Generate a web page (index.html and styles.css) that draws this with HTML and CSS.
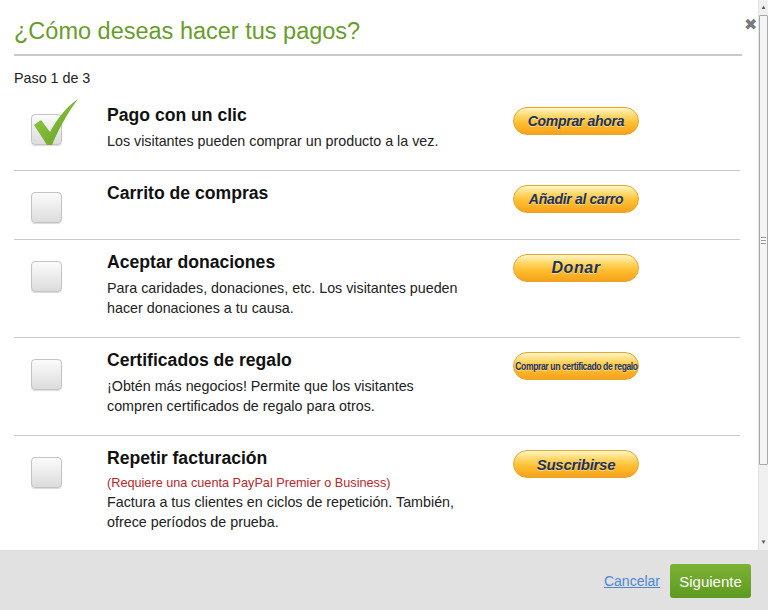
FILE: index.html
```html
<!DOCTYPE html>
<html lang="es">
<head>
    <meta charset="UTF-8">
    <title>¿Cómo deseas hacer tus pagos?</title>
    <link rel="stylesheet" href="styles.css">
</head>
<body>
    <div class="dialog">
        <div class="dialog-main">
            <div class="dialog-body">
                <span class="close">&#x2716;</span>
                <h1 class="title">¿Cómo deseas hacer tus pagos?</h1>
                <p class="step">Paso 1 de 3</p>

                <ul class="options">
                    <li class="option">
                        <span class="check is-checked">
                            <svg class="tick" width="48" height="50" viewBox="0 0 48 50">
                                <defs>
                                    <linearGradient id="g" x1="0" y1="0" x2="1" y2="1">
                                        <stop offset="0" stop-color="#9ccf4a"/>
                                        <stop offset="1" stop-color="#5e9c1e"/>
                                    </linearGradient>
                                </defs>
                                <path d="M2 27 L9 22 L18 34 C25 21 34 9 46 1 C37 13 28 28 20 47 L15 47 Z" fill="url(#g)"/>
                            </svg>
                        </span>
                        <div class="info">
                            <h2>Pago con un clic</h2>
                            <p>Los visitantes pueden comprar un producto a la vez.</p>
                        </div>
                        <span class="pp-btn">Comprar ahora</span>
                    </li>
                    <li class="option">
                        <span class="check"></span>
                        <div class="info">
                            <h2>Carrito de compras</h2>
                        </div>
                        <span class="pp-btn">Añadir al carro</span>
                    </li>
                    <li class="option">
                        <span class="check"></span>
                        <div class="info">
                            <h2>Aceptar donaciones</h2>
                            <p>Para caridades, donaciones, etc. Los visitantes pueden hacer donaciones a tu causa.</p>
                        </div>
                        <span class="pp-btn pp-donar">Donar</span>
                    </li>
                    <li class="option">
                        <span class="check"></span>
                        <div class="info">
                            <h2>Certificados de regalo</h2>
                            <p>¡Obtén más negocios! Permite que los visitantes compren certificados de regalo para otros.</p>
                        </div>
                        <span class="pp-btn pp-small"><span>Comprar un certificado de regalo</span></span>
                    </li>
                    <li class="option">
                        <span class="check"></span>
                        <div class="info">
                            <h2>Repetir facturación</h2>
                            <p class="note">(Requiere una cuenta PayPal Premier o Business)</p>
                            <p>Factura a tus clientes en ciclos de repetición. También, ofrece períodos de prueba.</p>
                        </div>
                        <span class="pp-btn pp-sub">Suscribirse</span>
                    </li>
                </ul>
            </div>
            <div class="scrollbar">
                <span class="sb-btn">&#9650;</span>
                <span class="sb-thumb"><i></i></span>
                <span class="sb-track"></span>
                <span class="sb-btn">&#9660;</span>
            </div>
        </div>
        <div class="dialog-foot">
            <a href="#" class="cancel">Cancelar</a>
            <button class="next">Siguiente</button>
        </div>
    </div>
</body>
</html>
```

FILE: styles.css
```css
* {
    margin:0; padding:0;
    box-sizing: border-box;
}
html, body { height:100%; }
body {
    background: #fff;
    color: #222;
    font-family: "Liberation Sans", Arial, sans-serif;
    overflow: hidden;
}
.dialog {
    height: 610px;
    display: flex;
    flex-direction: column;
}
.dialog-main {
    display: flex;
    height: 550px;
}
.dialog-body {
    position: relative;
    flex: 1;
    overflow: hidden;
    padding: 0 16px 0 14px;
}

/* fake scrollbar */
.scrollbar {
    width: 10px;
    display: flex;
    flex-direction: column;
    background: #f0f0f0;
    border-left: 1px solid #e2e2e2;
}
.sb-btn {
    height: 15px;
    font-size: 6px;
    line-height: 15px;
    text-align: center;
    color: #555;
}
.sb-thumb {
    height: 450px;
    display: flex;
    align-items: center;
    justify-content: center;
    background: #f4f4f4;
    border: 1px solid #a8a8a8;
    border-radius: 1px;
}
.sb-thumb i {
    width: 5px;
    height: 7px;
    border-top: 1px solid #999;
    border-bottom: 1px solid #999;
    background: linear-gradient(#fff 2px, #999 2px, #999 3px, #fff 3px);
}
.sb-track {
    flex: 1;
}

.close {
    position: absolute;
    top: 15px;
    right: 1px;
    font-size: 16px;
    color: #7a7a7a;
}
.title {
    padding-top: 17px;
    padding-bottom: 9px;
    border-bottom: 2px solid #cacaca;
    color: #6a9c2c;
    font-size: 23.5px;
    font-weight: normal;
    line-height: 28px;
}
.step {
    margin-top: 14px;
    font-size: 14.3px;
    line-height: 16px;
    color: #222;
}

.options {
    list-style: none;
    margin-top: 7px;
    margin-right: 2px;
}
.option {
    display: flex;
    align-items: flex-start;
    padding: 11px 0 19px 17px;
    border-bottom: 1px solid #c8c8c8;
}
.check {
    position: relative;
    flex: none;
    width: 31px;
    height: 31px;
    margin-top: 10px;
    margin-bottom: -3px;
    border: 1px solid #c4c4c4;
    border-radius: 4px;
    background: linear-gradient(#fbfbfb, #dcdcdc);
    box-shadow: 0 1px 1px rgba(0,0,0,0.15);
}
.tick {
    position: absolute;
    left: 0;
    top: -17px;
}
.info {
    width: 358px;
    margin-left: 45px;
}
.info h2 {
    font-size: 17.6px;
    line-height: 22px;
    margin-bottom: 5px;
    color: #111;
}
.info p {
    font-size: 14.3px;
    line-height: 20px;
    color: #222;
}
.info p.note {
    font-size: 12.7px;
    line-height: 18px;
    color: #b8262c;
}

.pp-btn {
    flex: none;
    display: flex;
    align-items: center;
    justify-content: center;
    width: 126px;
    height: 28px;
    margin-left: 48px;
    margin-top: 3px;
    border: 1px solid #e7a430;
    border-radius: 14px;
    background: linear-gradient(#fff6c8 0%, #ffd86a 30%, #ffbd2e 60%, #f6a21c 100%);
    color: #1c3258;
    font-size: 14px;
    font-weight: bold;
    font-style: italic;
    letter-spacing: -0.3px;
    text-shadow: 0 1px 0 rgba(255,255,255,0.5);
}
.pp-donar {
    font-size: 16px;
    letter-spacing: 0.6px;
}
.pp-sub {
    font-size: 15px;
}
.pp-small {
    font-style: normal;
    font-size: 11px;
    letter-spacing: -0.5px;
}
.pp-small span {
    display: inline-block;
    transform: scaleX(0.78);
    white-space: nowrap;
}

.dialog-foot {
    flex: 1;
    display: flex;
    justify-content: flex-end;
    align-items: center;
    gap: 10px;
    padding-right: 17px;
    padding-top: 2px;
    background: #e1e1e1;
}
.cancel {
    color: #4f86d6;
    font-size: 14px;
}
.next {
    width: 81px;
    height: 34px;
    border: 0;
    border-radius: 3px;
    background: linear-gradient(#7cb234, #5e9a20);
    color: #fff;
    font-family: "Liberation Sans", Arial, sans-serif;
    font-size: 15px;
}
```
